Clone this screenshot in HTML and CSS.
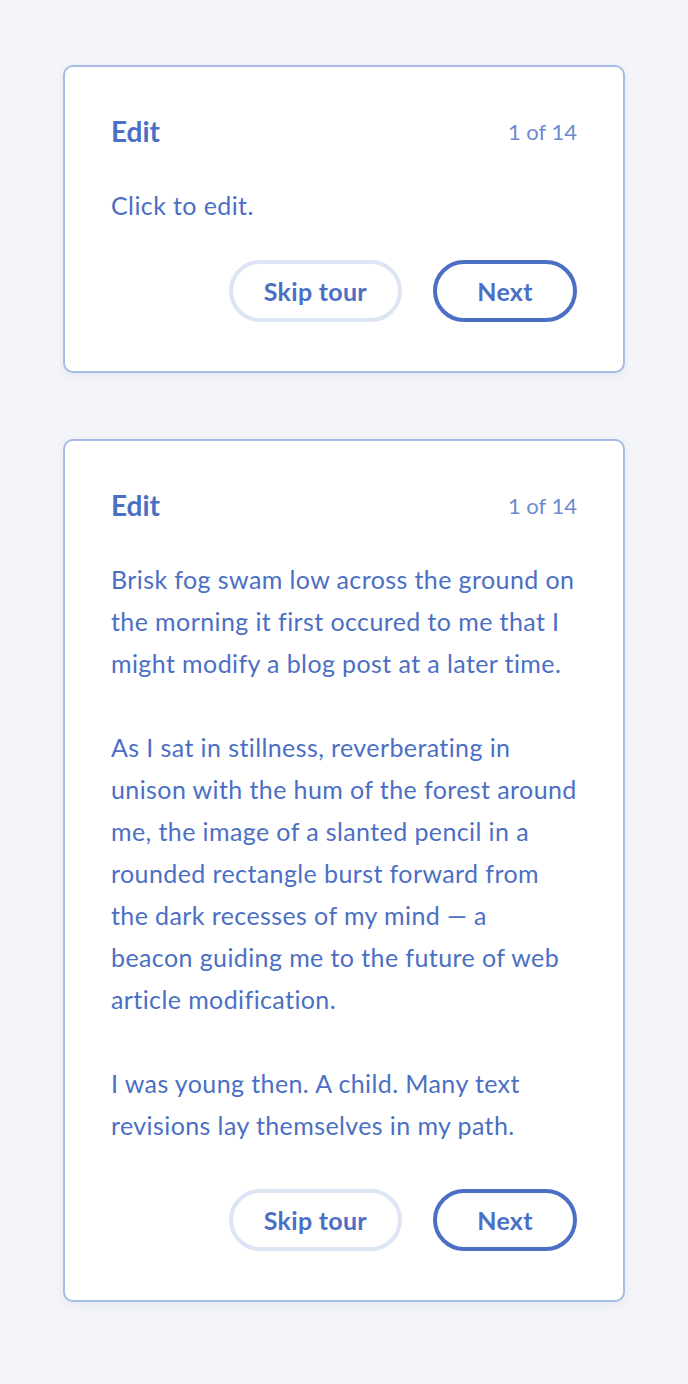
FILE: index.html
```html
<!DOCTYPE html>
<html lang="en">
<head>
  <meta charset="UTF-8">
  <title>Coach mark tour</title>
  <link rel="stylesheet" href="styles.css">
</head>
<body>
  <!-- Short step -->
  <div class="tour-card">
    <div class="tour-head">
      <h2 class="tour-title">Edit</h2>
      <span class="tour-step">1 of 14</span>
    </div>
    <div class="tour-body">
      <p>Click to edit.</p>
    </div>
    <div class="tour-actions tour-actions--short">
      <button class="btn btn-secondary">Skip tour</button>
      <button class="btn btn-primary">Next</button>
    </div>
  </div>

  <!-- Long step -->
  <div class="tour-card">
    <div class="tour-head">
      <h2 class="tour-title">Edit</h2>
      <span class="tour-step">1 of 14</span>
    </div>
    <div class="tour-body">
      <p>Brisk fog swam low across the ground on the morning it first occured to me that I might modify a blog post at a later time.</p>
      <p>As I sat in stillness, reverberating in unison with the hum of the forest around me, the image of a slanted pencil in a rounded rectangle burst forward from the dark recesses of my mind — a beacon&nbsp;guiding me to the future of web article modification.</p>
      <p>I was young then. A child. Many text revisions lay themselves in my path.</p>
    </div>
    <div class="tour-actions">
      <button class="btn btn-secondary">Skip tour</button>
      <button class="btn btn-primary">Next</button>
    </div>
  </div>
</body>
</html>
```

FILE: styles.css
```css
body{
  margin:0;
  padding:65px 63px 40px;
  background:#f4f5fa;
  font-family: Lato, "Open Sans", sans-serif;
  color:#4b6fc4;
}
.tour-card{
  box-sizing:border-box;
  width:562px;
  margin-bottom:66px;
  padding:48px 46px 49px;
  background:#fff;
  border:2px solid #a7bbe6;
  border-radius:10px;
  box-shadow:0 3px 8px rgba(60,80,140,.08);
}
.tour-head{
  display:flex;
  justify-content:space-between;
  align-items:center;
  height:32px;
}
.tour-title{
  margin:0;
  font-size:28px;
  font-weight:700;
  line-height:32px;
}
.tour-step{
  font-size:22px;
  color:#6d8bd2;
}
.tour-body{
  margin-top:37px;
  font-size:25px;
  letter-spacing:.4px;
  line-height:42px;
}
.tour-body p{margin:0 0 42px;}
.tour-body p:last-child{margin-bottom:0;}
.tour-actions{
  display:flex;
  justify-content:flex-end;
  gap:31px;
  margin-top:43px;
}
.tour-actions--short{margin-top:34px;}
.btn{
  box-sizing:border-box;
  height:62px;
  min-width:144px;
  padding:0 31px;
  border-radius:31px;
  border:4px solid;
  background:#fff;
  color:#4b6fc4;
  font-family:inherit;
  font-size:25px;
  letter-spacing:.3px;
  font-weight:700;
  cursor:pointer;
}
.btn-secondary{border-color:#dde4f4;}
.btn-primary{border-color:#4b6fc4;}
```
